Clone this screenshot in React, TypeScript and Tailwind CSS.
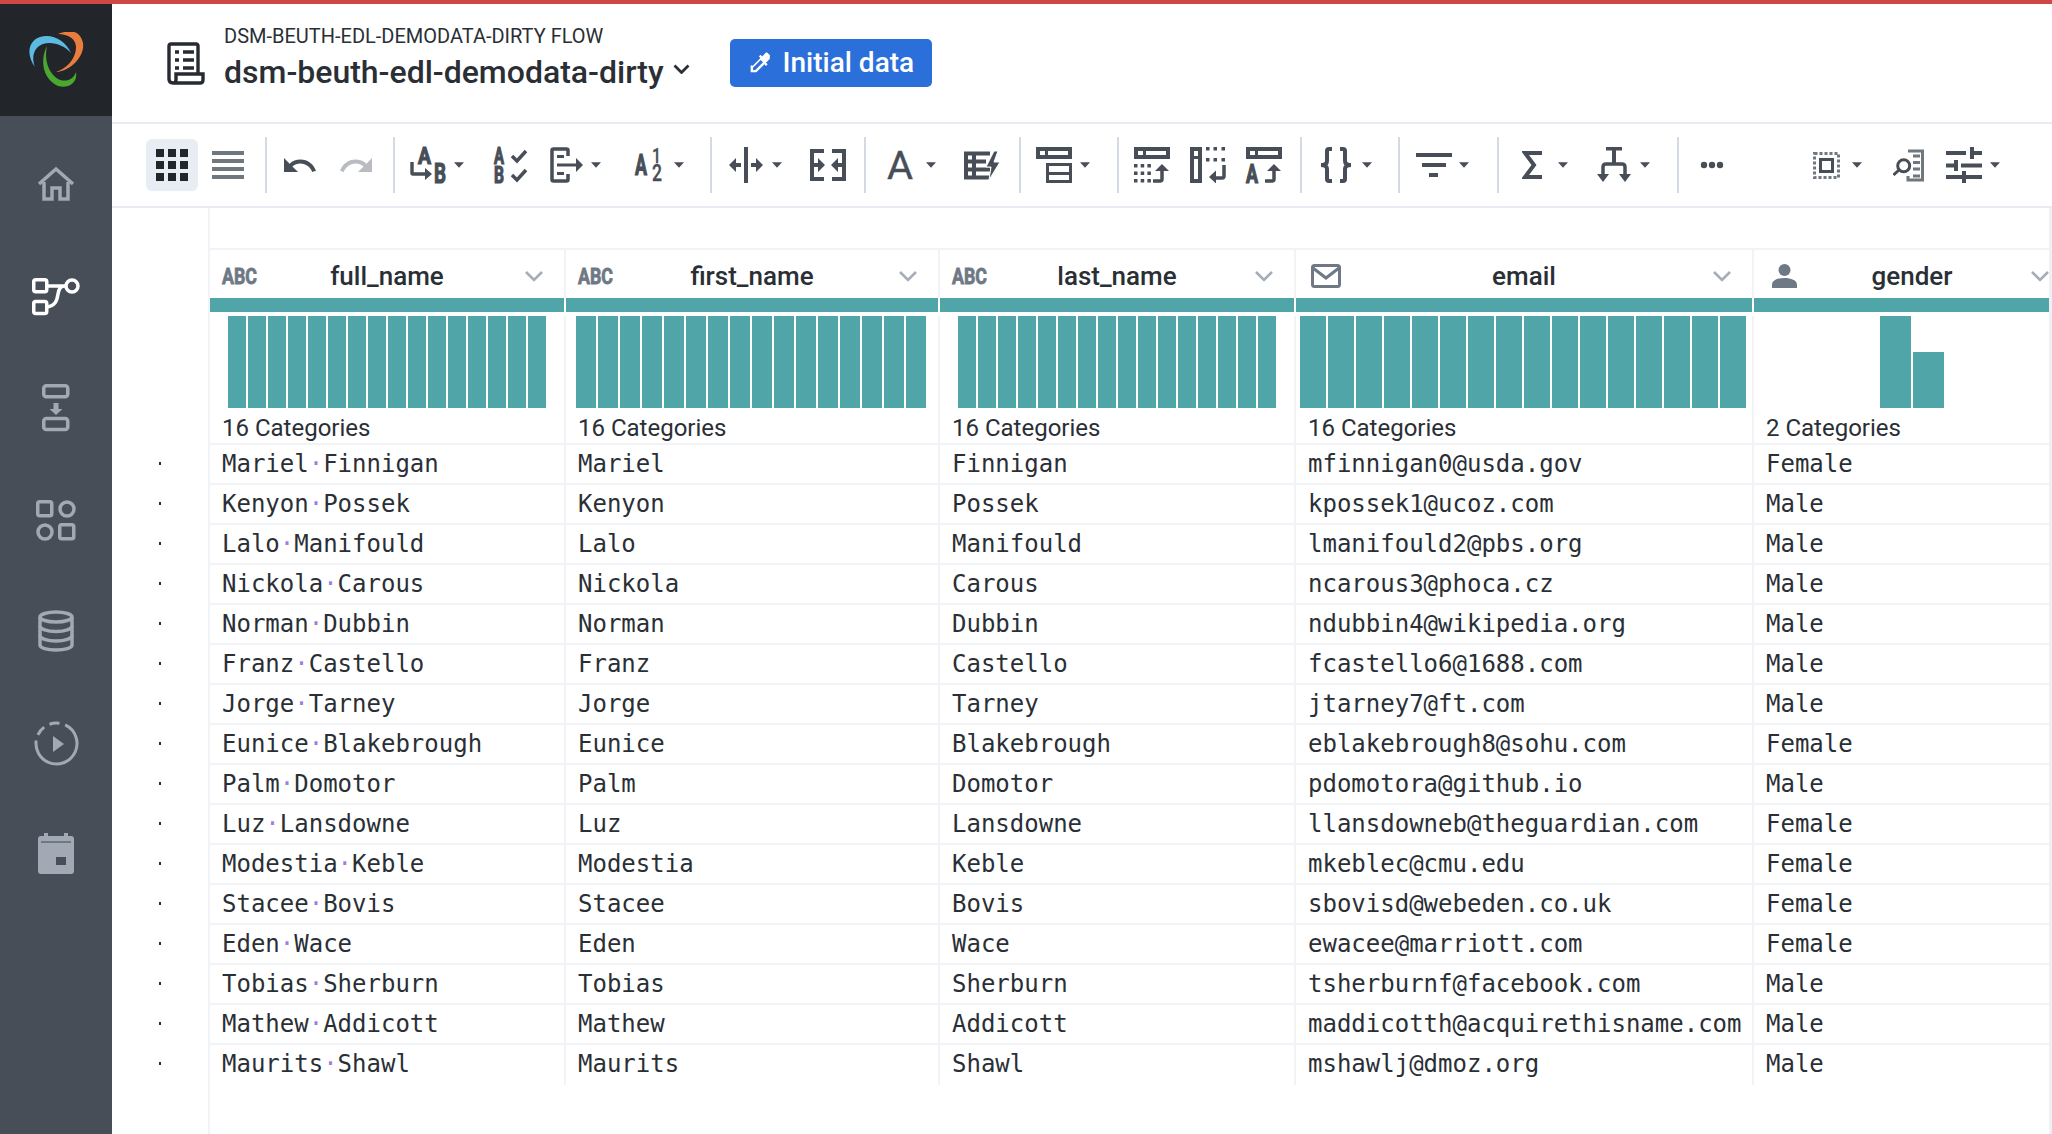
import React from "react";

const INK = "#474e57";
const SIDE = "#a0a9b4";

const Caret = ({ cls }: { cls: string }) => (
  <svg className={cls} width="10" height="6" viewBox="0 0 11 6"><path d="M0 0h11L5.5 6z" fill={INK} /></svg>
);
const Sep = ({ cls }: { cls: string }) => <div className={`w-[2px] h-[56px] bg-[#d3dae5] shrink-0 ${cls}`} />;

const TopBar = () => (
  <>
    <rect x="0" y="0" width="36" height="12" fill={INK} />
    <rect x="4" y="4" width="5" height="4" fill="#fff" />
    <rect x="12" y="4" width="20" height="4" fill="#fff" />
  </>
);
const UpArrow = () => (
  <>
    <path d="M28 17l7 7H21z" fill={INK} />
    <path d="M28 23v9q0 2-2 2h-7" fill="none" stroke={INK} strokeWidth="3.5" />
  </>
);
const Letter = ({ x, y, s, children, w, weight = 700, sw = 1.2 }: { x: number; y: number; s: number; children: string; w?: number; weight?: number; sw?: number }) => (
  <text x={x} y={y} fontSize={s} fontFamily="Roboto, sans-serif" fontWeight={weight} fill={INK} stroke={INK} strokeWidth={sw} textLength={w} lengthAdjust={w ? "spacingAndGlyphs" : undefined}>
    {children}
  </text>
);

const Toolbar = () => (
  <div className="h-[84px] shrink-0 flex items-center pl-[34px] pr-[52px] border-b-2 border-[#e8ecf2]">
    <div className="w-[52px] h-[52px] rounded-md bg-[#e8ecf3] flex items-center justify-center shrink-0">
      <div className="grid grid-cols-3 gap-[4px]">
        {Array.from({ length: 9 }).map((_, i) => <div key={i} className="w-[8px] h-[8px] bg-[#22262b]" />)}
      </div>
    </div>
    <div className="ml-[14px] w-[32px] flex flex-col gap-[4px] shrink-0">
      {[0, 1, 2, 3].map((i) => <div key={i} className="h-[4px] bg-[#6f777f]" />)}
    </div>
    <Sep cls="ml-[21px]" />
    <svg className="ml-[17px] shrink-0" width="32" height="15" viewBox="2 7 20.5 9.6"><path fill={INK} d="M12.5 8c-2.65 0-5.05.99-6.9 2.6L2 7v9h9l-3.62-3.62c1.39-1.16 3.16-1.88 5.12-1.88 3.54 0 6.55 2.31 7.6 5.5l2.37-.78C21.08 11.03 17.15 8 12.5 8z" /></svg>
    <svg className="ml-[24px] shrink-0" width="32" height="15" viewBox="1.5 7 20.5 9.6"><path fill="#b9bdc2" d="M18.4 10.6C16.55 8.99 14.15 8 11.5 8c-4.65 0-8.58 3.03-9.96 7.22L3.9 16c1.05-3.19 4.05-5.5 7.6-5.5 1.95 0 3.73.72 5.12 1.88L13 16h9V7l-3.6 3.6z" /></svg>
    <Sep cls="ml-[21px]" />
    <svg className="ml-[15px] shrink-0 overflow-visible" width="36" height="36" viewBox="0 0 36 36">
      <Letter x={8} y={17} s={24} w={13}>A</Letter>
      <Letter x={24} y={36} s={27} w={12}>B</Letter>
      <path d="M2 15v11q0 1 1 1h15" fill="none" stroke={INK} strokeWidth="3.4" />
      <path d="M15 21l7 6-7 6z" fill={INK} />
    </svg>
    <Caret cls="ml-[8px] shrink-0" />
    <svg className="ml-[30px] shrink-0 overflow-visible" width="33" height="36" viewBox="0 0 33 36">
      <Letter x={0} y={17} s={23} w={10}>A</Letter>
      <Letter x={0} y={36} s={23} w={10}>B</Letter>
      <path d="M18 9l5 5 9-10M18 28l5 5 9-10" fill="none" stroke={INK} strokeWidth="3.5" />
    </svg>
    <svg className="ml-[23px] shrink-0" width="33" height="36" viewBox="0 0 33 36">
      <path d="M18 9V3.5Q18 2 16.5 2h-13Q2 2 2 3.500v29Q2 34 3.500 34h13q1.500 0 1.500-1.500V27" fill="none" stroke={INK} strokeWidth="3.5" />
      <rect x="7" y="8" width="7" height="3" fill={INK} />
      <rect x="7" y="25" width="7" height="3" fill={INK} />
      <rect x="7" y="16.5" width="20" height="3" fill={INK} />
      <path d="M26 11l7 7-7 7z" fill={INK} />
    </svg>
    <Caret cls="ml-[8px] shrink-0" />
    <svg className="ml-[34px] shrink-0 overflow-visible" width="27" height="36" viewBox="0 0 27 36">
      <Letter x={0} y={28} s={29} w={12}>A</Letter>
      <Letter x={17} y={16} s={20} w={9} weight={500} sw={0.3}>1</Letter>
      <Letter x={17} y={34} s={23} w={10} weight={500} sw={0.3}>2</Letter>
    </svg>
    <Caret cls="ml-[12px] shrink-0" />
    <Sep cls="ml-[26px]" />
    <svg className="ml-[17px] shrink-0" width="34" height="36" viewBox="0 0 34 36">
      <rect x="15" y="0" width="4" height="36" fill={INK} />
      <path d="M0 18l7-7v5h5v4H7v5zM34 18l-7-7v5h-5v4h5v5z" fill={INK} />
    </svg>
    <Caret cls="ml-[9px] shrink-0" />
    <svg className="ml-[28px] shrink-0" width="36" height="32" viewBox="0 0 36 32">
      <path d="M14 2H2v28h12M22 2h12v28H22" fill="none" stroke={INK} strokeWidth="4" />
      <path d="M4 14h4V9l7 7-7 7v-5H4zM32 14h-4V9l-7 7 7 7v-5h4z" fill={INK} />
    </svg>
    <Sep cls="ml-[18px]" />
    <svg className="ml-[21px] shrink-0 overflow-visible" width="26" height="28" viewBox="0 0 26 28">
      <Letter x={0} y={28} s={39} w={26} weight={400} sw={0.4}>A</Letter>
    </svg>
    <Caret cls="ml-[13px] shrink-0" />
    <svg className="ml-[28px] shrink-0" width="36" height="29" viewBox="0 0 36 29">
      <path d="M26 2.500H2v24h24M2 10.500h20M2 18.500h24M10 2.500v24" fill="none" stroke={INK} strokeWidth="4" />
      <path d="M30 0l-8 16h5l-2 13 11-18h-6l4-11z" fill={INK} stroke="#fff" strokeWidth="1" />
    </svg>
    <Sep cls="ml-[19px]" />
    <svg className="ml-[15px] shrink-0" width="36" height="36" viewBox="0 0 36 36">
      <TopBar />
      <rect x="11.500" y="17.500" width="23" height="17" fill="none" stroke={INK} strokeWidth="3" />
      <rect x="10" y="25" width="26" height="3" fill={INK} />
    </svg>
    <Caret cls="ml-[8px] shrink-0" />
    <Sep cls="ml-[27px]" />
    <svg className="ml-[15px] shrink-0" width="36" height="36" viewBox="0 0 36 36">
      <TopBar />
      {[0, 6.7, 13.4].map((x) => [17, 24.5, 32].map((y) => <rect key={`${x}-${y}`} x={x} y={y} width="3.500" height="3.500" fill={INK} />))}
      <UpArrow />
    </svg>
    <svg className="ml-[20px] shrink-0" width="36" height="36" viewBox="0 0 36 36">
      <rect x="0" y="0" width="12" height="36" fill={INK} />
      <rect x="4" y="4" width="4" height="5" fill="#fff" />
      <rect x="4" y="12" width="4" height="20" fill="#fff" />
      {[16, 23.5, 31.500].map((x) => [0, 11].map((y) => <rect key={`${x}-${y}`} x={x} y={y} width="3.500" height="3.500" fill={INK} />))}
      <path d="M34 18v11q0 2-2 2h-8" fill="none" stroke={INK} strokeWidth="3.5" />
      <path d="M26 23.500v13l-7-6.500z" fill={INK} />
    </svg>
    <svg className="ml-[20px] shrink-0 overflow-visible" width="36" height="36" viewBox="0 0 36 36">
      <TopBar />
      <Letter x={0} y={36} s={25} w={12}>A</Letter>
      <UpArrow />
    </svg>
    <Sep cls="ml-[18px]" />
    <svg className="ml-[16px] shrink-0" width="36" height="36" viewBox="0 0 36 36">
      <path d="M14 2h-3Q9 2 9 4v10q0 4-6 4 6 0 6 4v10q0 2 2 2h3M22 2h3q2 0 2 2v10q0 4 6 4-6 0-6 4v10q0 2-2 2h-3" fill="none" stroke={INK} strokeWidth="4" />
    </svg>
    <Caret cls="ml-[8px] shrink-0" />
    <Sep cls="ml-[26px]" />
    <svg className="ml-[16px] shrink-0" width="36" height="24" viewBox="0 0 36 24">
      <rect x="0" y="0" width="36" height="4" fill={INK} />
      <rect x="6" y="10" width="24" height="4" fill={INK} />
      <rect x="13" y="20" width="9" height="4" fill={INK} />
    </svg>
    <Caret cls="ml-[7px] shrink-0" />
    <Sep cls="ml-[28px]" />
    <svg className="ml-[23px] shrink-0" width="20" height="28" viewBox="0 0 20 28">
      <path d="M20 2H3l9 12-9 12h17" fill="none" stroke={INK} strokeWidth="4" />
    </svg>
    <Caret cls="ml-[16px] shrink-0" />
    <svg className="ml-[29px] shrink-0" width="34" height="36" viewBox="0 0 34 36">
      <rect x="9" y="0" width="16" height="3.500" fill={INK} />
      <rect x="15" y="3" width="4" height="15" fill={INK} />
      <path d="M6 28v-8q0-3 3-3h16q3 0 3 3v8" fill="none" stroke={INK} strokeWidth="3.5" />
      <path d="M0 27h12l-6 8zM22 27h12l-6 8z" fill={INK} />
    </svg>
    <Caret cls="ml-[9px] shrink-0" />
    <Sep cls="ml-[27px]" />
    <svg className="ml-[21px] shrink-0" width="24" height="8" viewBox="0 0 24 8">
      <circle cx="4" cy="4" r="3.2" fill={INK} /><circle cx="12" cy="4" r="3.2" fill={INK} /><circle cx="20" cy="4" r="3.2" fill={INK} />
    </svg>
    <svg className="ml-auto shrink-0" width="27" height="27" viewBox="0 0 27 27">
      <rect x="1.500" y="1.500" width="24" height="24" fill="none" stroke="#6f777f" strokeWidth="3" strokeDasharray="3 2" />
      <rect x="7.500" y="7.500" width="12" height="12" fill="none" stroke={INK} strokeWidth="3" />
    </svg>
    <Caret cls="ml-[12px] shrink-0" />
    <svg className="ml-[31px] shrink-0" width="31" height="33" viewBox="0 0 31 33">
      <path d="M15 2h14.500v29H15v-4" fill="none" stroke="#6f777f" strokeWidth="3" />
      <path d="M20 7h7M20 13.500h7M20 20h7M20 27h7" fill="none" stroke="#6f777f" strokeWidth="3" />
      <circle cx="10.700" cy="16.700" r="6" fill="#fff" stroke={INK} strokeWidth="3" />
      <path d="M6 21l-5.500 5" fill="none" stroke={INK} strokeWidth="3" />
    </svg>
    <svg className="ml-[22px] shrink-0" width="36" height="36" viewBox="0 0 36 36">
      <path d="M0 4h20v4H0zM24 0h4v12h-4zM28 4h8v4h-8zM0 16.500h10v4H0zM8 13h4v11H8zM15 16.500h21v4H15zM0 28h16v4H0zM16 24h4v12h-4zM20 28h16v4H20z" fill={INK} />
    </svg>
    <Caret cls="ml-[8px] shrink-0" />
  </div>
);

const Sidebar = () => (
  <div className="w-[112px] shrink-0 bg-[#474e57] flex flex-col items-center">
    <div className="w-full h-[112px] bg-[#22262b] shrink-0 flex items-center justify-center">
      <svg width="56" height="56" viewBox="28 33 56 56">
        <path d="M35 68C26 56 28 42 40 38 52 34 66 42 71 54 64 46 52 42 43 45 34 48 31 58 35 68Z" fill="#5bbbe0" />
        <path d="M58 35C68 31 80 30 83 44 85 56 72 72 56 73 66 70 76 60 76 48 76 40 68 35 58 35Z" fill="#e87d3e" />
        <path d="M47 47C40 60 42 80 58 87 68 90 78 84 76 73 74 80 66 84 58 80 48 74 44 60 47 47Z" fill="#4aa82f" />
      </svg>
    </div>
    <svg className="mt-[50px] shrink-0" width="40" height="35" viewBox="0 0 40 35" fill="none" stroke={SIDE} strokeWidth="3.5">
      <path d="M3 18L20 3l17 15" />
      <path d="M8 16v17h8V22h8v11h8V16" />
    </svg>
    <svg className="mt-[77px] shrink-0" width="48" height="38" viewBox="0 0 48 38" fill="none" stroke="#fff" strokeWidth="3.5">
      <rect x="1.750" y="1.750" width="13" height="12" rx="2" />
      <rect x="1.750" y="23.500" width="13" height="12" rx="2" />
      <circle cx="40" cy="8" r="6" />
      <path d="M15 8h19M33 8c-5 0-6 3-7 8-1 7-3 12-11 13" />
    </svg>
    <svg className="mt-[68px] shrink-0" width="28" height="48" viewBox="0 0 28 48" fill="none" stroke={SIDE} strokeWidth="3.5">
      <rect x="1.750" y="1.750" width="24" height="11" rx="2.500" />
      <rect x="1.750" y="34.500" width="24" height="11" rx="2.500" />
      <path d="M11.500 19h5v6h4l-6.500 6-6.500-6h4z" fill={SIDE} stroke="none" />
    </svg>
    <svg className="mt-[68px] shrink-0" width="40" height="41" viewBox="0 0 40 41" fill="none" stroke={SIDE} strokeWidth="3.5">
      <rect x="1.750" y="1.750" width="14" height="14" rx="2" />
      <ellipse cx="31" cy="9" rx="7" ry="7" />
      <ellipse cx="9" cy="32" rx="7" ry="7" />
      <rect x="23.750" y="24.750" width="14" height="14" rx="2" />
    </svg>
    <svg className="mt-[69px] shrink-0" width="36" height="42" viewBox="0 0 36 42" fill="none" stroke={SIDE} strokeWidth="3.5">
      <ellipse cx="18" cy="7" rx="16" ry="5" />
      <path d="M2 7v28c0 3 7 5 16 5s16-2 16-5V7" />
      <path d="M2 16c0 3 7 5.500 16 5.500S34 19 34 16M2 25.500c0 3 7 5.500 16 5.500s16-2.500 16-5.500" />
    </svg>
    <svg className="mt-[69px] shrink-0" width="45" height="45" viewBox="0 0 45 45" fill="none" stroke={SIDE} strokeWidth="3">
      <circle cx="22.500" cy="22.500" r="20.500" strokeDasharray="90 6 10 6 10 6" transform="rotate(-65 22.500 22.500)" />
      <path d="M19 15l11 8-11 8z" fill={SIDE} stroke="none" />
    </svg>
    <svg className="mt-[67px] shrink-0" width="36" height="41" viewBox="0 0 36 41">
      <rect x="6" y="0" width="4" height="6" fill={SIDE} />
      <rect x="26" y="0" width="4" height="6" fill={SIDE} />
      <rect x="0" y="3" width="36" height="38" rx="3" fill={SIDE} />
      <rect x="3" y="8" width="30" height="2" fill="#6f7885" />
      <rect x="18" y="24" width="10" height="8" fill={INK} />
    </svg>
  </div>
);

const Header = () => (
  <div className="h-[118px] shrink-0 flex items-center pl-[54px] border-b-2 border-[#e8ecf2] box-content">
    <svg className="shrink-0" width="39" height="43" viewBox="0 0 39 43" fill="none" stroke="#262b31" strokeWidth="3.4">
      <path d="M32 32V4q0-2-2-2H5Q3 2 3 4v33q0 4 4 4h27q3 0 3-3v-6H10v6q0 3-3 3" />
      <path d="M9 10h4M9 18h4M9 26h4M17 10h11M17 18h11M17 26h11" strokeWidth="3.6" />
    </svg>
    <div className="ml-[19px] flex flex-col pb-[10px]">
      <div className="h-[24px] leading-[24px] text-[20px] text-[#2a2f36] font-['Roboto',sans-serif]">DSM-BEUTH-EDL-DEMODATA-DIRTY FLOW</div>
      <div className="mt-[4px] h-[40px] leading-[40px] text-[32px] font-medium text-[#2a2f36] font-['Roboto',sans-serif] flex items-center">
        dsm-beuth-edl-demodata-dirty
        <svg className="ml-[9px] mb-[6px]" width="17" height="10" viewBox="0 0 17 10" fill="none" stroke="#2a2f36" strokeWidth="2.8"><path d="M1.500 1.500l7 7 7-7" /></svg>
      </div>
    </div>
    <div className="ml-[40px] w-[202px] h-[48px] rounded-[5px] bg-[#2b6fdb] flex items-center pl-[16px] gap-[9px] text-white text-[28px] font-medium font-['Roboto',sans-serif]">
      <svg width="28" height="28" viewBox="0 0 24 24" fill="#fff"><path d="M20.710 5.630l-2.340-2.340c-.39-.39-1.020-.39-1.410 0l-3.120 3.120-1.410-1.420-1.420 1.420 1.410 1.410-6.600 6.600A.996.996 0 0 0 4 15.590V20l4.410 0c.26 0 .52-.1.71-.29l6.600-6.600 1.410 1.420 1.410-1.420-1.410-1.410 3.120-3.120c.39-.39.39-1.020 0-1.410zM8 18H6v-2l6.600-6.600 2 2L8 18z" /></svg>
      Initial data
    </div>
  </div>
);

const cols = [
  { name: "full_name", icon: "abc", cat: "16 Categories", hist: "ml-[18px] w-[318px]", iconCls: "ml-[12px]" },
  { name: "first_name", icon: "abc", cat: "16 Categories", hist: "ml-[10px] w-[350px]", iconCls: "ml-[12px]" },
  { name: "last_name", icon: "abc", cat: "16 Categories", hist: "ml-[18px] w-[318px]", iconCls: "ml-[12px]" },
  { name: "email", icon: "mail", cat: "16 Categories", hist: "ml-[4px] w-[446px]", iconCls: "ml-[15px]" },
  { name: "gender", icon: "person", cat: "2 Categories", hist: "", iconCls: "ml-[18px]" },
];

const rows = [
  ["Mariel Finnigan", "Mariel", "Finnigan", "mfinnigan0@usda.gov", "Female"],
  ["Kenyon Possek", "Kenyon", "Possek", "kpossek1@ucoz.com", "Male"],
  ["Lalo Manifould", "Lalo", "Manifould", "lmanifould2@pbs.org", "Male"],
  ["Nickola Carous", "Nickola", "Carous", "ncarous3@phoca.cz", "Male"],
  ["Norman Dubbin", "Norman", "Dubbin", "ndubbin4@wikipedia.org", "Male"],
  ["Franz Castello", "Franz", "Castello", "fcastello6@1688.com", "Male"],
  ["Jorge Tarney", "Jorge", "Tarney", "jtarney7@ft.com", "Male"],
  ["Eunice Blakebrough", "Eunice", "Blakebrough", "eblakebrough8@sohu.com", "Female"],
  ["Palm Domotor", "Palm", "Domotor", "pdomotora@github.io", "Male"],
  ["Luz Lansdowne", "Luz", "Lansdowne", "llansdowneb@theguardian.com", "Female"],
  ["Modestia Keble", "Modestia", "Keble", "mkeblec@cmu.edu", "Female"],
  ["Stacee Bovis", "Stacee", "Bovis", "sbovisd@webeden.co.uk", "Female"],
  ["Eden Wace", "Eden", "Wace", "ewacee@marriott.com", "Female"],
  ["Tobias Sherburn", "Tobias", "Sherburn", "tsherburnf@facebook.com", "Male"],
  ["Mathew Addicott", "Mathew", "Addicott", "maddicotth@acquirethisname.com", "Male"],
  ["Maurits Shawl", "Maurits", "Shawl", "mshawlj@dmoz.org", "Male"],
];

const ColIcon = ({ kind }: { kind: string }) => {
  if (kind === "abc")
    return (
      <svg className="overflow-visible" width="36" height="18" viewBox="0 0 36 18">
        <text x="0" y="17" fontSize="22" fontFamily="Roboto, sans-serif" fontWeight="700" fill="#6f7885" stroke="#6f7885" strokeWidth="0.8" textLength="35" lengthAdjust="spacingAndGlyphs">ABC</text>
      </svg>
    );
  if (kind === "mail")
    return (
      <svg width="30" height="24" viewBox="0 0 30 24" fill="none" stroke="#6f7885" strokeWidth="3">
        <rect x="1.500" y="1.500" width="27" height="21" rx="2" />
        <path d="M2 4l13 10L28 4" />
      </svg>
    );
  return (
    <svg width="25" height="24" viewBox="0 0 25 24" fill="#6f7885">
      <circle cx="12.500" cy="6" r="6" />
      <path d="M0 24v-3c0-5 6-7 12.500-7S25 16 25 21v3z" />
    </svg>
  );
};

const Mono = ({ v }: { v: string }) => {
  const parts = v.split(" ");
  return (
    <>
      {parts.map((p, i) => (
        <React.Fragment key={i}>
          {i > 0 && <span className="text-[#9b7fe0]">·</span>}
          {p}
        </React.Fragment>
      ))}
    </>
  );
};

const GRID = "grid grid-cols-[356px_374px_356px_458px_318px]";
const CELL = "border-r-2 border-[#f2f3f6]";

const Table = () => (
  <div className="flex-1 min-h-0 flex border-r-[3px] border-[#eef0f3]">
    <div className="w-[98px] shrink-0 border-r-2 border-[#f2f3f6] pt-[237px]">
      {rows.map((_, i) => (
        <div key={i} className="h-[40px] flex items-center pl-[47px] pb-[3px]">
          <span className="w-[2px] h-[3px] bg-[#2a2f36] block" />
        </div>
      ))}
    </div>
    <div className="flex-1 min-w-0 overflow-hidden">
      <div className="h-[42px] border-b-2 border-[#f2f3f6]" />
      <div className={`${GRID} h-[48px]`}>
        {cols.map((c) => (
          <div key={c.name} className={`${CELL} grid grid-cols-[1fr_auto_1fr] items-center pt-[4px]`}>
            <div className={`${c.iconCls} flex items-center`}><ColIcon kind={c.icon} /></div>
            <div className="text-[26px] leading-[32px] font-medium text-[#2a2f36] font-['Roboto',sans-serif]">{c.name}</div>
            <svg className="justify-self-end mr-[21px]" width="18" height="11" viewBox="0 0 18 11" fill="none" stroke="#a4adb8" strokeWidth="2.6"><path d="M1 1l8 8 8-8" /></svg>
          </div>
        ))}
      </div>
      <div className={`${GRID} h-[14px]`}>
        {cols.map((c) => <div key={c.name} className="bg-[#50a5a9] border-r-2 border-white" />)}
      </div>
      <div className={`${GRID} h-[96px] pt-[4px]`}>
        {cols.map((c) => (
          <div key={c.name} className={`${CELL} flex`}>
            {c.hist ? (
              <div className={`${c.hist} flex gap-[1.500px]`}>
                {Array.from({ length: 16 }).map((_, i) => <div key={i} className="flex-1 bg-[#50a5a9]" />)}
              </div>
            ) : (
              <div className="mx-auto flex items-end gap-[1.500px]">
                <div className="w-[31px] h-[92px] bg-[#50a5a9]" />
                <div className="w-[31px] h-[56px] bg-[#50a5a9]" />
              </div>
            )}
          </div>
        ))}
      </div>
      <div className={`${GRID} h-[37px]`}>
        {cols.map((c) => (
          <div key={c.name} className={`${CELL} border-b-2 pl-[12px] pt-[5px] text-[24px] leading-[30px] text-[#2a2f36] font-['Roboto',sans-serif] whitespace-nowrap`}>{c.cat}</div>
        ))}
      </div>
      {rows.map((r, i) => (
        <div key={i} className={`${GRID} h-[40px]`}>
          {r.map((v, j) => (
            <div key={j} className={`${CELL} ${i < rows.length - 1 ? "border-b-2" : ""} pl-[12px] text-[24px] leading-[38px] text-[#2a2f36] font-['DejaVu_Sans_Mono',monospace] whitespace-nowrap`}>
              <Mono v={v} />
            </div>
          ))}
        </div>
      ))}
    </div>
  </div>
);

export default function App() {
  return (
    <div className="w-[2052px] h-[1134px] overflow-hidden bg-white flex flex-col border-t-4 border-[#d04846]">
      <div className="flex-1 min-h-0 flex">
        <Sidebar />
        <div className="flex-1 min-w-0 flex flex-col">
          <Header />
          <Toolbar />
          <Table />
        </div>
      </div>
    </div>
  );
}
